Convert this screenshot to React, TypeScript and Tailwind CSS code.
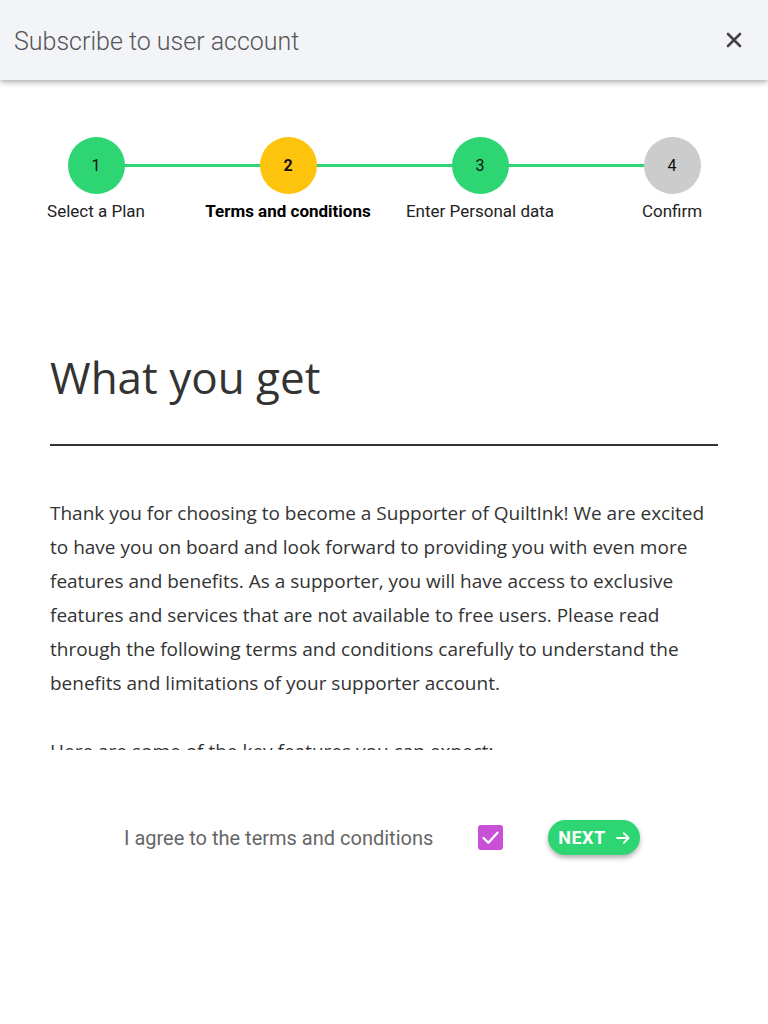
import React from "react";

const steps = [
  { n: 1, label: "Select a Plan", bg: "bg-[#2ed573]", bold: false },
  { n: 2, label: "Terms and conditions", bg: "bg-[#fec30d]", bold: true },
  { n: 3, label: "Enter Personal data", bg: "bg-[#2ed573]", bold: false },
  { n: 4, label: "Confirm", bg: "bg-[#cccccc]", bold: false },
];

export default function App() {
  return (
    <div className="w-[768px] h-[1024px] bg-white overflow-hidden relative" style={{ fontFamily: "Roboto, sans-serif" }}>
      <header className="h-[80px] bg-[#f3f4f8] flex items-center justify-between pl-[14px] pr-[24px] shadow-[0_2px_6px_rgba(0,0,0,0.35)] relative z-10">
        <h1 className="text-[25px] font-light text-[#555] mt-[3px]">Subscribe to user account</h1>
        <svg width="20" height="20" viewBox="0 0 20 20" className="text-[#444]">
          <path d="M4 4 L16 16 M16 4 L4 16" stroke="currentColor" strokeWidth="2.6" strokeLinecap="round" />
        </svg>
      </header>

      <div className="relative mt-[57px] h-[90px]">
        <div className="absolute left-[96px] right-[96px] top-[27px] h-[3px] bg-[#2ed573]" />
        <div className="relative grid grid-cols-4">
          {steps.map((s) => (
            <div key={s.n} className="flex flex-col items-center">
              <div className={`w-[57px] h-[57px] rounded-full ${s.bg} flex items-center justify-center text-[16px] text-[#111] ${s.bold ? "font-bold" : ""}`}>
                {s.n}
              </div>
              <div className={`mt-[5px] text-[17px] whitespace-nowrap ${s.bold ? "font-bold text-black" : "text-[#222]"}`}>{s.label}</div>
            </div>
          ))}
        </div>
      </div>

      <div className="px-[50px] pt-[120px] h-[523px] overflow-hidden" style={{ fontFamily: "'Open Sans', sans-serif" }}>
        <h2 className="text-[44px] text-[#333] leading-[60px]">What you get</h2>
        <div className="mt-[37px] h-[2px] bg-[#333]" />
        <p className="mt-[50px] text-[19px] leading-[34px] text-[#333]">
          Thank you for choosing to become a Supporter of QuiltInk! We are excited to have you on board and look forward to providing you with even more features and benefits. As a supporter, you will have access to exclusive features and services that are not available to free users. Please read through the following terms and conditions carefully to understand the benefits and limitations of your supporter account.
        </p>
        <p className="mt-[34px] text-[19px] leading-[34px] text-[#333]">Here are some of the key features you can expect:</p>
      </div>

      <div className="flex items-center mt-[70px] pl-[124px]">
        <span className="text-[20px] text-[#666]">I agree to the terms and conditions</span>
        <div className="ml-[45px] w-[25px] h-[25px] rounded-[3px] bg-[#c94fd6] flex items-center justify-center">
          <svg width="21" height="21" viewBox="0 0 24 24"><path d="M4 12.5 L9.5 18 L20 6.5" stroke="white" strokeWidth="2.6" fill="none" strokeLinecap="round" strokeLinejoin="round" /></svg>
        </div>
        <button className="ml-[45px] h-[35px] pl-[10px] pr-[8px] rounded-full bg-[#2ed573] text-white font-bold text-[18px] tracking-[0.5px] flex items-center gap-[8px] shadow-[0_3px_5px_rgba(0,0,0,0.3)]">
          NEXT
          <svg width="18" height="18" viewBox="0 0 24 24"><path d="M4 12 H19 M13 5.5 L19.5 12 L13 18.5" stroke="white" strokeWidth="2.4" fill="none" strokeLinecap="round" strokeLinejoin="round" /></svg>
        </button>
      </div>
    </div>
  );
}
